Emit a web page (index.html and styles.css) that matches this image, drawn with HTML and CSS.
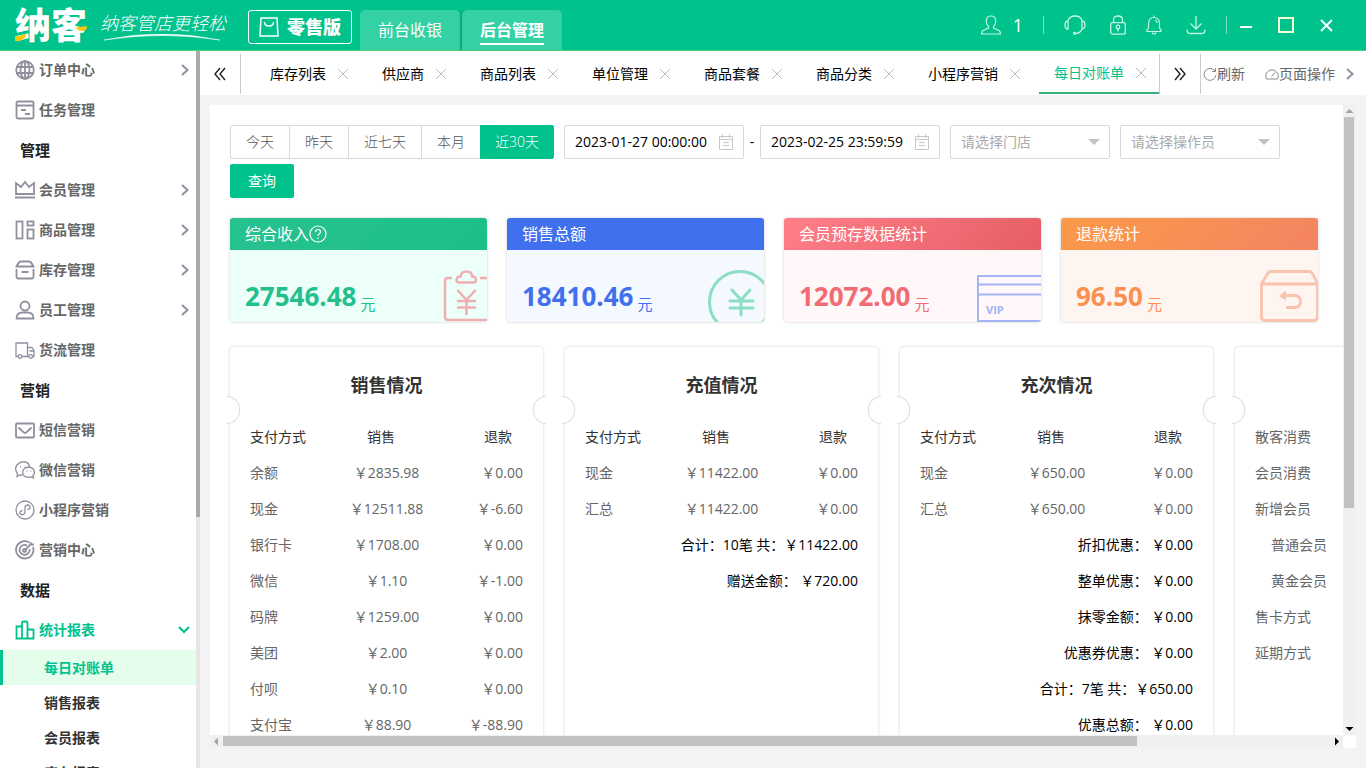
FILE: index.html
```html
<!DOCTYPE html>
<html lang="zh-CN">
<head>
  <meta charset="UTF-8">
  <meta name="viewport" content="width=device-width, initial-scale=1.0">
  <title>每日对账单</title>
  <link rel="stylesheet" href="styles.css">
</head>
<body>
  <header class="topbar">
    <div class="logo">
      <span class="logo-name">纳客</span>
      <svg class="logo-accent" width="74" height="32" viewBox="0 0 74 32"><path d="M0 26.500 Q6 26 11 23.500 L10 27.500 Q6 31.500 0 31Z M61 17.500 L72 16 Q72 20 68 21 Q63 21 61 17.500Z" fill="#fdc500"/></svg>
    </div>
    <div class="slogan">
      <span>纳客管店更轻松</span>
      <svg width="116" height="7" viewBox="0 0 116 7"><path d="M0 6 Q58 -6 116 6 Q58 -3 0 6Z" fill="#fff" stroke="#fff" stroke-width=".5"/></svg>
    </div>
    <button class="edition" type="button">
      <svg width="20" height="20" viewBox="0 0 20 20" fill="none" stroke="#fff" stroke-width="1.500"><path d="M2 1h16l1 18H1z"/><path d="M5.500 5q0 4 4.500 4t4.500-4"/></svg>
      零售版
    </button>
    <nav class="modes">
      <a href="#" class="mode">前台收银</a>
      <a href="#" class="mode active"><span>后台管理</span></a>
    </nav>
    <div class="tools">
      <button class="tool user" type="button">
        <svg width="20" height="20" viewBox="0 0 20 20" fill="none" stroke="#c3f5e0" stroke-width="1.200"><path d="M7.500 11.500C4 8 4.500 1 10 1s6 7 2.500 10.500v1.500l5.500 2.500q1.500 1 1.500 3.500H.5q0-2.500 1.500-3.500L7.500 13z"/></svg>
        <span>1</span>
      </button>
      <span class="sep"></span>
      <button class="tool headset" type="button" aria-label="客服">
        <svg width="22" height="20" viewBox="0 0 22 20" fill="none" stroke="#c3f5e0" stroke-width="1.300"><path d="M4 6Q5 1 11 1t7 5M4 6v8Q1 14 1 10t3-4zM18 6v8q3 0 3-4t-3-4zM18 14q-1.500 4.500-7 4.500"/><circle cx="10.500" cy="18.300" r="1"/></svg>
      </button>
      <button class="tool lock" type="button" aria-label="锁屏">
        <svg width="16" height="20" viewBox="0 0 16 20" fill="none" stroke="#c3f5e0" stroke-width="1.300"><rect x=".7" y="7.700" width="14.600" height="11.500" rx="2"/><path d="M3.500 7.500V5q0-4 4.500-4t4.500 4v2.500"/><circle cx="8" cy="12" r="1.800"/><path d="M8 14v2.500"/></svg>
      </button>
      <button class="tool bell" type="button" aria-label="通知">
        <svg width="16" height="20" viewBox="0 0 16 20" fill="none" stroke="#c3f5e0" stroke-width="1.200"><path d="M1 16.500h14v-1.500l-1.500-2V8Q13 2.500 8 2.500T2.500 8v5L1 15zM8 .5v2M6 17.500q.5 1.500 2 1.500t2-1.500M9 5q2 .5 2 3"/></svg>
      </button>
      <button class="tool download" type="button" aria-label="下载">
        <svg width="20" height="20" viewBox="0 0 20 20" fill="none" stroke="#c3f5e0" stroke-width="1.300"><path d="M10 1v13M4.500 8.500L10 14l5.500-5.500M1 14.500q0 4 3 4h12q3 0 3-4"/></svg>
      </button>
      <span class="sep"></span>
      <button class="tool win" type="button" aria-label="最小化">
        <svg width="16" height="16" viewBox="0 0 16 16" stroke="#fff" stroke-width="2"><path d="M2 10h12"/></svg>
      </button>
      <button class="tool win" type="button" aria-label="最大化">
        <svg width="16" height="16" viewBox="0 0 16 16" fill="none" stroke="#f4ffd8" stroke-width="2"><rect x="1" y="1" width="14" height="14"/></svg>
      </button>
      <button class="tool win" type="button" aria-label="关闭">
        <svg width="16" height="16" viewBox="0 0 16 16" stroke="#fff" stroke-width="2"><path d="M3 3l11 11M14 3L3 14"/></svg>
      </button>
    </div>
  </header>

  <div class="layout">
    <aside class="sidebar">
      <nav class="menu">
        <a href="#" class="item">
          <svg class="ico" viewBox="0 0 20 20"><circle cx="10" cy="10" r="8.800"/><ellipse cx="10" cy="10" rx="4.500" ry="8.800"/><path d="M10 1v18M1.500 7h17M1.500 13h17"/></svg>
          订单中心
          <svg class="arrow" viewBox="0 0 10 12"><path d="M2 1l5.500 5L2 11"/></svg>
        </a>
        <a href="#" class="item">
          <svg class="ico" viewBox="0 0 20 20"><rect x="1.500" y="1.500" width="17" height="17" rx="1.500"/><path d="M1.500 5.500h17M6 10h5M10 14h5"/></svg>
          任务管理
        </a>
        <h3 class="group">管理</h3>
        <a href="#" class="item">
          <svg class="ico" viewBox="0 0 20 20"><path d="M1 3v11h18V3l-5 4-4-5-4 5zM0 17.500h20"/></svg>
          会员管理
          <svg class="arrow" viewBox="0 0 10 12"><path d="M2 1l5.500 5L2 11"/></svg>
        </a>
        <a href="#" class="item">
          <svg class="ico" viewBox="0 0 20 20"><rect x="1.500" y="1.500" width="6" height="17"/><rect x="12.500" y="1.500" width="6" height="4"/><rect x="12.500" y="9.500" width="6" height="9"/></svg>
          商品管理
          <svg class="arrow" viewBox="0 0 10 12"><path d="M2 1l5.500 5L2 11"/></svg>
        </a>
        <a href="#" class="item">
          <svg class="ico" viewBox="0 0 20 20"><path d="M1.500 6.500Q4 1.500 6 1.500h8q2 0 4.500 5zM1.500 9v8q0 1.500 1.500 1.500h14q1.500 0 1.500-1.500V9M6.500 12h7"/></svg>
          库存管理
          <svg class="arrow" viewBox="0 0 10 12"><path d="M2 1l5.500 5L2 11"/></svg>
        </a>
        <a href="#" class="item">
          <svg class="ico" viewBox="0 0 20 20"><circle cx="10" cy="6" r="4.500"/><path d="M1.500 18.500h17q0-6-6-6h-5q-6 0-6 6z"/></svg>
          员工管理
          <svg class="arrow" viewBox="0 0 10 12"><path d="M2 1l5.500 5L2 11"/></svg>
        </a>
        <a href="#" class="item">
          <svg class="ico thin" viewBox="0 0 20 20"><path d="M3 16.500H1V3h11.500v13.500H7M12.500 7.500H17l2 3v6h-1.500M14 16.500h-1.500M14.500 11H19"/><circle cx="5" cy="16.500" r="1.800"/><circle cx="15.700" cy="16.500" r="1.800"/></svg>
          货流管理
        </a>
        <h3 class="group">营销</h3>
        <a href="#" class="item">
          <svg class="ico" viewBox="0 0 20 20"><rect x="1" y="3.500" width="18" height="14" rx="1"/><path d="M3.500 7.500Q9 13 10 13t6.500-5.500"/></svg>
          短信营销
        </a>
        <a href="#" class="item">
          <svg class="ico thin" viewBox="0 0 20 20"><path d="M7.500 15l-2.500 0-3 1.500.5-3Q-1 9 2 5t8-3q4 1 4.500 4.500"/><path d="M13.500 7q5.500.5 6 5 0 2-1.500 3.500l.5 2.500-2-1q-6 1.500-8.500-2.500-1.500-6.500 5.500-7.500zM5 7h.8M9.500 7h.8M11.500 11h.8M15.500 11h.8"/></svg>
          微信营销
        </a>
        <a href="#" class="item">
          <svg class="ico thin" viewBox="0 0 20 20"><circle cx="10" cy="10" r="9"/><path d="M7.500 10.500q-3 .5-2.500 3 2 2.500 4.500 0Q10 13 10 10V8q0-3 3-3 2.500.5 2 3-.5 1.500-2.500 1.500"/></svg>
          小程序营销
        </a>
        <a href="#" class="item">
          <svg class="ico" viewBox="0 0 20 20"><path d="M14 2.200A8.700 8.700 0 1 0 18 7M12 5.500A5 5 0 1 0 14.500 9M9.500 10.500l6-6V2M15.500 4.500H19"/><circle cx="9.500" cy="10.500" r="1.500"/></svg>
          营销中心
        </a>
        <h3 class="group">数据</h3>
        <a href="#" class="item open">
          <svg class="ico" viewBox="0 0 20 20"><path d="M1.500 6.500H7v12H1.500zM7 18.500V3q0-1.500 1.500-1.500H11q1.500 0 1.500 1.500v15.500zM12.500 9.500h6v9h-6z"/></svg>
          统计报表
          <svg class="arrow down" viewBox="0 0 12 10"><path d="M1 2l5 5 5-5"/></svg>
        </a>
        <a href="#" class="sub active">每日对账单</a>
        <a href="#" class="sub">销售报表</a>
        <a href="#" class="sub">会员报表</a>
        <a href="#" class="sub">库存报表</a>
      </nav>
      <div class="side-scroll"><div class="side-thumb"></div></div>
    </aside>

    <main class="main">
      <div class="tabbar">
        <button class="step" type="button" aria-label="向左"><svg width="12" height="14" viewBox="0 0 12 14"><path d="M6 1L1 7l5 6M11 1L6 7l5 6"/></svg></button>
        <div class="tabs">
          <a href="#" class="tab">库存列表<svg viewBox="0 0 10 10"><path d="M0 0l10 10M10 0L0 10"/></svg></a>
          <a href="#" class="tab">供应商<svg viewBox="0 0 10 10"><path d="M0 0l10 10M10 0L0 10"/></svg></a>
          <a href="#" class="tab">商品列表<svg viewBox="0 0 10 10"><path d="M0 0l10 10M10 0L0 10"/></svg></a>
          <a href="#" class="tab">单位管理<svg viewBox="0 0 10 10"><path d="M0 0l10 10M10 0L0 10"/></svg></a>
          <a href="#" class="tab">商品套餐<svg viewBox="0 0 10 10"><path d="M0 0l10 10M10 0L0 10"/></svg></a>
          <a href="#" class="tab">商品分类<svg viewBox="0 0 10 10"><path d="M0 0l10 10M10 0L0 10"/></svg></a>
          <a href="#" class="tab">小程序营销<svg viewBox="0 0 10 10"><path d="M0 0l10 10M10 0L0 10"/></svg></a>
          <a href="#" class="tab active">每日对账单<svg viewBox="0 0 10 10"><path d="M0 0l10 10M10 0L0 10"/></svg></a>
        </div>
        <button class="step next" type="button" aria-label="向右"><svg width="12" height="14" viewBox="0 0 12 14"><path d="M1 1l5 6-5 6M6 1l5 6-5 6"/></svg></button>
        <div class="page-tools">
          <button type="button"><svg width="14" height="14" viewBox="0 0 14 14"><path d="M12 4A6 6 0 1 0 13 8M12.500 1v3.500H9"/></svg>刷新</button>
          <button type="button"><svg width="14" height="14" viewBox="0 0 14 14"><path d="M1.500 12A6.200 6.200 0 1 1 12.500 12zM6.500 9.500l3.500-4"/></svg>页面操作</button>
          <svg class="more" viewBox="0 0 10 12"><path d="M2 1l5.500 5L2 11"/></svg>
        </div>
      </div>

      <section class="frame">
        <div class="content">
          <form class="filters">
            <div class="periods">
              <button type="button">今天</button>
              <button type="button">昨天</button>
              <button type="button">近七天</button>
              <button type="button">本月</button>
              <button type="button" class="active">近30天</button>
            </div>
            <div class="range">
              <label class="date"><input type="text" value="2023-01-27 00:00:00" aria-label="开始时间"><svg width="14" height="16" viewBox="0 0 14 16"><path d="M.5 2.500h13v13H.5zM.5 5.500h13M3.500 0v4M10.500 0v4M4 8.500h6M4 11.500h6"/></svg></label>
              <span>-</span>
              <label class="date"><input type="text" value="2023-02-25 23:59:59" aria-label="结束时间"><svg width="14" height="16" viewBox="0 0 14 16"><path d="M.5 2.500h13v13H.5zM.5 5.500h13M3.500 0v4M10.500 0v4M4 8.500h6M4 11.500h6"/></svg></label>
            </div>
            <label class="pick"><select aria-label="门店"><option>请选择门店</option></select></label>
            <label class="pick"><select aria-label="操作员"><option>请选择操作员</option></select></label>
            <button class="query" type="button">查询</button>
          </form>

          <div class="totals">
            <div class="total green">
              <h2>综合收入<svg width="18" height="18" viewBox="0 0 18 18" fill="none" stroke="#fff" stroke-width="1.200"><circle cx="9" cy="9" r="8"/><path d="M6.500 7q0-2.500 2.500-2.500T11.500 7q0 1-1.500 2-1 .5-1 2M9 12.500V14"/></svg></h2>
              <div class="sum"><strong>27546.48</strong><span>元</span></div>
              <svg class="art" width="44" height="52" viewBox="0 0 44 52" fill="none" stroke="#efafb2" stroke-width="2.500"><path d="M9 8H5q-3 0-3 3v36q0 3 3 3h40M37 8h8"/><path d="M16 12.500q-2.500 0-2.500-2.500 0-3.500 4-3.500Q18 1.500 23.500 1.500t5.500 5q4 0 4 3.500 0 2.500-2.500 2.500z"/><path d="M14.500 20l9 10 9-10M23.500 30v15M14 31h19M14 37.500h19"/></svg>
            </div>
            <div class="total blue">
              <h2>销售总额</h2>
              <div class="sum"><strong>18410.46</strong><span>元</span></div>
              <svg class="art" width="56" height="52" viewBox="0 0 56 52" fill="none" stroke="#8cdec3" stroke-width="3"><circle cx="32" cy="32" r="30.500"/><path d="M24 20l9 10 9-10M33 30v15M22 31h23M22 38h23" stroke-linecap="round"/></svg>
            </div>
            <div class="total red">
              <h2>会员预存数据统计</h2>
              <div class="sum"><strong>12072.00</strong><span>元</span></div>
              <svg class="art" width="64" height="52" viewBox="0 0 64 52" fill="none" stroke="#a3b5f4" stroke-width="2"><path d="M64 6H1v45h63M1 14.500h63M1 24.500h63"/><text x="9" y="44" class="vip">VIP</text></svg>
            </div>
            <div class="total orange">
              <h2>退款统计</h2>
              <div class="sum"><strong>96.50</strong><span>元</span></div>
              <svg class="art" width="58" height="52" viewBox="0 0 58 52" fill="none" stroke="#fac3ab" stroke-width="2.800"><path d="M1.500 14L8 3q1-1.500 3-1.500h38q2 0 3 1.500l6 11M1.500 14v33q0 3.500 3.500 3.500h49q3.500 0 3.500-3.500V14zM26 37.500h9q5.500-.5 5.500-6t-5.500-6H24"/><path d="M19 26l7-5.500v10z" fill="#fac3ab" stroke="none"/></svg>
            </div>
          </div>

          <div class="details">
            <div class="detail">
              <h2>销售情况</h2>
              <table>
                <thead><tr><th>支付方式</th><th>销售</th><th>退款</th></tr></thead>
                <tbody>
                  <tr><td>余额</td><td>￥2835.98</td><td>￥0.00</td></tr>
                  <tr><td>现金</td><td>￥12511.88</td><td>￥-6.60</td></tr>
                  <tr><td>银行卡</td><td>￥1708.00</td><td>￥0.00</td></tr>
                  <tr><td>微信</td><td>￥1.10</td><td>￥-1.00</td></tr>
                  <tr><td>码牌</td><td>￥1259.00</td><td>￥0.00</td></tr>
                  <tr><td>美团</td><td>￥2.00</td><td>￥0.00</td></tr>
                  <tr><td>付呗</td><td>￥0.10</td><td>￥0.00</td></tr>
                  <tr><td>支付宝</td><td>￥88.90</td><td>￥-88.90</td></tr>
                </tbody>
              </table>
            </div>
            <div class="detail">
              <h2>充值情况</h2>
              <table>
                <thead><tr><th>支付方式</th><th>销售</th><th>退款</th></tr></thead>
                <tbody>
                  <tr><td>现金</td><td>￥11422.00</td><td>￥0.00</td></tr>
                  <tr><td>汇总</td><td>￥11422.00</td><td>￥0.00</td></tr>
                </tbody>
              </table>
              <p class="line">合计：10笔 共：￥11422.00</p>
              <p class="line">赠送金额： ￥720.00</p>
            </div>
            <div class="detail">
              <h2>充次情况</h2>
              <table>
                <thead><tr><th>支付方式</th><th>销售</th><th>退款</th></tr></thead>
                <tbody>
                  <tr><td>现金</td><td>￥650.00</td><td>￥0.00</td></tr>
                  <tr><td>汇总</td><td>￥650.00</td><td>￥0.00</td></tr>
                </tbody>
              </table>
              <p class="line">折扣优惠： ￥0.00</p>
              <p class="line">整单优惠： ￥0.00</p>
              <p class="line">抹零金额： ￥0.00</p>
              <p class="line">优惠券优惠： ￥0.00</p>
              <p class="line">合计：7笔 共：￥650.00</p>
              <p class="line">优惠总额： ￥0.00</p>
            </div>
            <div class="detail untitled">
              <ul>
                <li>散客消费</li>
                <li>会员消费</li>
                <li>新增会员</li>
                <li class="level">普通会员</li>
                <li class="level">黄金会员</li>
                <li>售卡方式</li>
                <li>延期方式</li>
              </ul>
            </div>
          </div>
        </div>
        <div class="vscroll">
          <svg width="13" height="12" viewBox="0 0 13 12"><path d="M2.500 8L6.500 4l4 4z" fill="#a3a3a3"/></svg>
          <div class="vtrack"><div class="vthumb"></div></div>
          <svg width="13" height="12" viewBox="0 0 13 12"><path d="M2.500 4l4 4 4-4z" fill="#000"/></svg>
        </div>
        <div class="hscroll">
          <svg width="13" height="13" viewBox="0 0 13 13"><path d="M8 2.500L4 6.500l4 4z" fill="#a3a3a3"/></svg>
          <div class="htrack"><div class="hthumb"></div></div>
          <svg width="13" height="13" viewBox="0 0 13 13"><path d="M5 2.500l4 4-4 4z" fill="#000"/></svg>
        </div>
      </section>
    </main>
  </div>
</body>
</html>
```

FILE: styles.css
```css
* {
  box-sizing: border-box;
}
body {
  margin: 0;
  height: 100vh;
  display: flex;
  flex-direction: column;
  overflow: hidden;
  background: #f4f4f4;
  color: #000;
  font-family: "Open Sans", "Noto Sans CJK SC", sans-serif;
  font-size: 14px;
  line-height: 20px;
}
a {
  color: inherit;
  text-decoration: none;
}
button, input, select {
  font: inherit;
  color: inherit;
  margin: 0;
}
button {
  padding: 0;
  border: none;
  background: none;
  cursor: pointer;
}
svg {
  display: block;
  flex: none;
}
h2, h3, p, ul {
  margin: 0;
  padding: 0;
}

/* top bar */
.topbar {
  position: relative;
  z-index: 1;
  flex: none;
  display: flex;
  align-items: flex-end;
  height: 50px;
  padding-left: 15px;
  background: #00c28d;
  box-shadow: 0 1px 0 #4cd070;
  color: #fff;
}
.logo {
  position: relative;
  height: 50px;
  width: 74px;
}
.logo-name {
  font-size: 36px;
  line-height: 52px;
  font-weight: 900;
}
.logo-accent {
  position: absolute;
  left: 0;
  bottom: 8px;
}
.slogan {
  width: 148px;
  height: 50px;
  padding: 12px 0 0 11px;
  font-size: 18px;
  line-height: 22px;
  font-style: italic;
  font-weight: 300;
  white-space: nowrap;
}
.slogan svg {
  margin-left: 4px;
}
.edition {
  display: flex;
  align-items: center;
  justify-content: center;
  gap: 8px;
  width: 104px;
  height: 34px;
  margin: 0 8px 6px 11px;
  border: 1px solid #fff;
  border-radius: 3px;
  font-size: 18px;
  font-weight: 900;
}
.modes {
  display: flex;
  gap: 2px;
}
.mode {
  width: 100px;
  height: 40px;
  border-radius: 5px 5px 0 0;
  background: #33d1a3;
  font-size: 16px;
  line-height: 40px;
  text-align: center;
}
.mode.active {
  font-weight: bold;
  box-shadow: -2px 0 1px #13a67b;
}
.mode.active span {
  display: inline-block;
  height: 35px;
  border-bottom: 2px solid #fff;
}
.tools {
  display: flex;
  align-items: center;
  gap: 20px;
  height: 50px;
  margin-left: auto;
  padding-right: 32px;
}
.tool {
  display: flex;
  align-items: center;
}
.user {
  gap: 12px;
  font-size: 18px;
}
.sep {
  width: 1px;
  height: 18px;
  background: #7fe0c4;
}
.headset, .bell {
  margin-right: 4px;
}
.win {
  margin-left: -8px;
  margin-right: 12px;
}
.win:last-child {
  margin-right: 0;
}
.sep + .win {
  margin-left: -9px;
}

/* side menu */
.layout {
  flex: 1;
  min-height: 0;
  display: flex;
}
.sidebar {
  flex: none;
  display: flex;
  width: 200px;
  background: #fff;
}
.menu {
  flex: 1;
  overflow: hidden;
}
.item {
  display: flex;
  align-items: center;
  height: 40px;
  padding: 0 6px 0 15px;
  color: #666;
  font-weight: bold;
}
.item.open {
  color: #00c28d;
}
.ico {
  width: 20px;
  height: 20px;
  margin-right: 4px;
  fill: none;
  stroke: #8f8f9e;
  stroke-width: 1.8;
}
.ico.thin {
  stroke-width: 1.3;
}
.item.open .ico {
  stroke: #00c28d;
}
.arrow {
  width: 10px;
  height: 12px;
  margin-left: auto;
  fill: none;
  stroke: #9494a2;
  stroke-width: 2.2;
}
.arrow.down {
  width: 12px;
  height: 10px;
  stroke: #00c28d;
}
.group {
  height: 40px;
  padding-left: 20px;
  color: #222;
  font-size: 15px;
  line-height: 40px;
}
.sub {
  display: block;
  height: 35px;
  padding-left: 41px;
  border-left: 3px solid #fff;
  color: #333;
  font-weight: bold;
  line-height: 35px;
}
.sub.active {
  border-color: #00c28d;
  background: #e5feec;
  color: #00c28d;
}
.side-scroll {
  width: 4px;
  background: #e6e6e6;
}
.side-thumb {
  height: 65%;
  background: #aaa;
}

/* page tabs */
.main {
  flex: 1;
  min-width: 0;
  display: flex;
  flex-direction: column;
}
.tabbar {
  flex: none;
  display: flex;
  align-items: center;
  height: 45px;
  padding-top: 2px;
  background: #fff;
}
.step {
  display: flex;
  align-items: center;
  justify-content: center;
  width: 41px;
  height: 40px;
  border-right: 1px solid #ccc;
}
.step svg {
  fill: none;
  stroke: #222;
  stroke-width: 1.4;
}
.tabs {
  flex: 1;
  display: flex;
  justify-content: flex-end;
  gap: 6px;
  height: 43px;
  overflow: hidden;
}
.tab {
  display: flex;
  align-items: center;
  gap: 12px;
  height: 42px;
  padding: 2px 13px 0 15px;
  white-space: nowrap;
}
.tab svg {
  width: 10px;
  height: 10px;
  stroke: #bbb;
}
.tab.active {
  border-bottom: 2px solid #35b277;
  color: #00c28d;
}
.step.next {
  border-left: 1px solid #ccc;
  width: 42px;
}
.page-tools {
  display: flex;
  align-items: center;
  width: 165px;
  padding: 0 10px 0 2px;
  color: #666;
}
.page-tools button {
  display: flex;
  align-items: center;
  margin-right: 20px;
  white-space: nowrap;
}
.page-tools button + button {
  margin-right: 10px;
}
.page-tools svg {
  fill: none;
  stroke: #888;
}
.page-tools .more {
  width: 10px;
  height: 12px;
  stroke: #9494a2;
  stroke-width: 2.2;
}

/* report page */
.frame {
  flex: 1;
  min-height: 0;
  display: grid;
  grid-template: minmax(0, 1fr) 13px / minmax(0, 1fr) 13px;
  margin: 10px 10px 20px;
  background: #fff;
}
.content {
  overflow: hidden;
  padding: 20px 25px 0 20px;
}
.filters {
  display: flex;
  flex-wrap: wrap;
  gap: 5px 10px;
}
.periods {
  display: flex;
}
.periods button {
  height: 34px;
  padding: 0 15px;
  margin-right: -1px;
  border: 1px solid #d9d9d9;
  background: #fff;
  color: #555;
  font-weight: 300;
}
.periods button:first-child {
  border-radius: 2px 0 0 2px;
}
.periods button.active {
  margin-right: 0;
  padding: 0 14px;
  border-color: #00c28d;
  border-radius: 0 2px 2px 0;
  background: #00c28d;
  color: #fff;
}
.range {
  display: flex;
  align-items: center;
}
.range span {
  width: 16px;
  text-align: center;
}
.date {
  display: flex;
  align-items: center;
  width: 180px;
  height: 34px;
  padding: 0 10px;
  border: 1px solid #d9d9d9;
  border-radius: 2px;
}
.date input {
  flex: 1;
  min-width: 0;
  padding: 0;
  border: none;
  outline: none;
}
.date svg {
  fill: none;
  stroke: #c8c8c8;
}
.pick {
  position: relative;
}
.pick select {
  display: block;
  width: 160px;
  height: 34px;
  padding: 0 10px;
  border: 1px solid #d9d9d9;
  border-radius: 2px;
  background: #fff;
  color: #aaa;
  appearance: none;
}
.pick::after {
  content: "";
  position: absolute;
  top: 14px;
  right: 10px;
  border: 6px solid transparent;
  border-top-color: #c2c2c2;
}
.query {
  width: 64px;
  height: 34px;
  border-radius: 2px;
  background: #00c28d;
  color: #fff;
}
.totals {
  display: grid;
  grid-template-columns: repeat(4, 1fr);
  gap: 20px;
  margin-top: 20px;
}
.total {
  position: relative;
  height: 104px;
  overflow: hidden;
  border-radius: 3px;
  box-shadow: 0 0 3px #ccc;
}
.total h2 {
  display: flex;
  align-items: center;
  height: 32px;
  padding-left: 15px;
  color: #fff;
  font-size: 16px;
  font-weight: normal;
}
.sum {
  display: flex;
  align-items: flex-end;
  height: 64px;
  padding-left: 15px;
  gap: 4px;
}
.sum strong {
  font-size: 26px;
  line-height: 36px;
}
.sum span {
  font-size: 15px;
  line-height: 20px;
}
.art {
  position: absolute;
  right: 0;
  bottom: 0;
}
.vip {
  fill: #a3b5f4;
  stroke: none;
  font-size: 11px;
  font-weight: bold;
}
.green {
  background: #edfff9;
  color: #22c08c;
}
.green h2 {
  background: linear-gradient(135deg, #27c290, #1cbf89);
}
.blue {
  background: #f4f8ff;
  color: #4070ed;
}
.blue h2 {
  background: #4070ed;
}
.red {
  background: #fff7f8;
  color: #f26a74;
}
.red h2 {
  background: linear-gradient(135deg, #ff7f89, #e65e66);
}
.orange {
  background: #fff5f0;
  color: #fb9150;
}
.orange h2 {
  background: linear-gradient(135deg, #fb9a48, #f48463);
}

/* detail cards */
.details {
  display: flex;
  gap: 22px;
  margin-top: 25px;
}
.detail {
  position: relative;
  flex: none;
  width: 313px;
  min-height: 480px;
  padding: 20px 20px 0;
  border-radius: 4px;
  background: #fff;
  box-shadow: 0 0 3px #ccc;
}
.detail::before, .detail::after {
  content: "";
  position: absolute;
  top: 49px;
  width: 12px;
  height: 26px;
  border: 1px solid #ddd;
  background: #fff;
}
.detail::before {
  left: -3px;
  border-left: none;
  border-radius: 0 13px 13px 0;
}
.detail::after {
  right: -3px;
  border-right: none;
  border-radius: 13px 0 0 13px;
}
.detail h2 {
  margin-bottom: 16px;
  color: #333;
  font-size: 18px;
  line-height: 36px;
  text-align: center;
}
.detail.untitled {
  padding-top: 72px;
}
.detail table {
  width: 100%;
  table-layout: fixed;
  border-collapse: collapse;
  color: #666;
}
.detail th, .detail td {
  height: 36px;
  padding: 0;
  text-align: left;
  white-space: nowrap;
}
.detail th {
  color: #333;
  font-weight: normal;
}
.detail th:nth-child(2), .detail td:nth-child(2) {
  text-align: center;
}
.detail th:nth-child(3), .detail td:nth-child(3) {
  text-align: right;
}
.detail th:nth-child(n+2) {
  padding-right: 11px;
}
.line {
  line-height: 36px;
  text-align: right;
}
.detail ul {
  list-style: none;
  color: #666;
}
.detail li {
  line-height: 36px;
}
.level {
  padding-left: 16px;
}

/* scroll bars */
.vscroll {
  display: flex;
  flex-direction: column;
  background: #f0f0f0;
}
.vtrack {
  flex: 1;
  padding: 0 2px 0 1px;
}
.vthumb {
  height: 64.5%;
  background: #c1c1c1;
}
.hscroll {
  display: flex;
  background: #f0f0f0;
}
.htrack {
  flex: 1;
  padding: 1px 0 2px;
}
.hthumb {
  width: 82.6%;
  height: 10px;
  background: #c1c1c1;
}
```
